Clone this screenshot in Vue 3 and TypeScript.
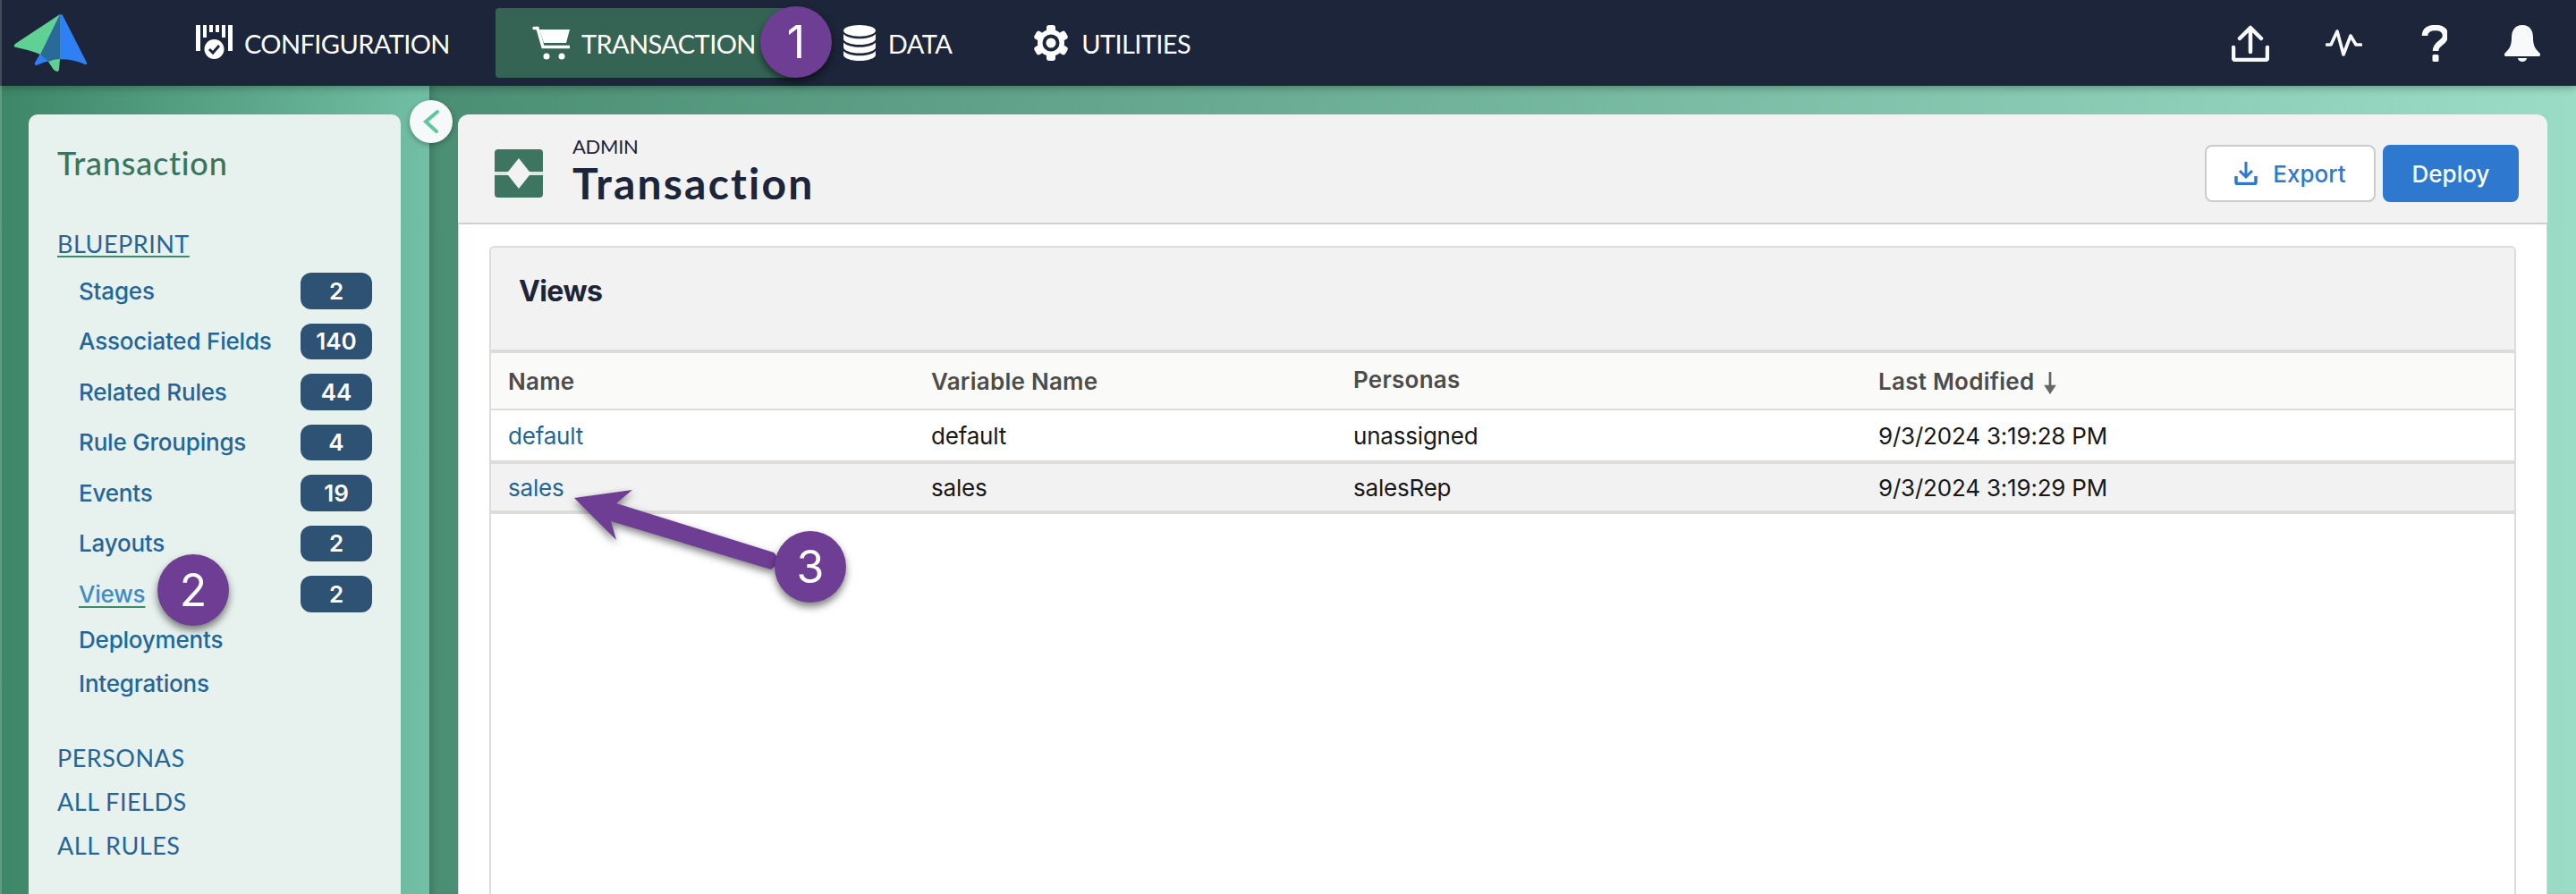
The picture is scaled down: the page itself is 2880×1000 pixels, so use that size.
<script setup lang="ts">
interface NavItem {
  label: string
  icon: string
  active?: boolean
}
interface SideItem {
  label: string
  count?: number
  current?: boolean
}
interface ViewRow {
  name: string
  variable: string
  persona: string
  modified: string
}

const navItems: NavItem[] = [
  { label: 'CONFIGURATION', icon: 'config' },
  { label: 'TRANSACTION', icon: 'cart', active: true },
  { label: 'DATA', icon: 'data' },
  { label: 'UTILITIES', icon: 'gear' }
]

const blueprintItems: SideItem[] = [
  { label: 'Stages', count: 2 },
  { label: 'Associated Fields', count: 140 },
  { label: 'Related Rules', count: 44 },
  { label: 'Rule Groupings', count: 4 },
  { label: 'Events', count: 19 },
  { label: 'Layouts', count: 2 },
  { label: 'Views', count: 2, current: true }
]

const plainItems = ['Deployments', 'Integrations']
const sections = ['PERSONAS', 'ALL FIELDS', 'ALL RULES']

const rows: ViewRow[] = [
  { name: 'default', variable: 'default', persona: 'unassigned', modified: '9/3/2024 3:19:28 PM' },
  { name: 'sales', variable: 'sales', persona: 'salesRep', modified: '9/3/2024 3:19:29 PM' }
]
</script>

<template>
  <div class="app">
    <header class="topbar">
      <svg class="logo" viewBox="0 0 120 96" width="120" height="96">
        <path fill="#2f80f5" d="M67 17Q69 15 70 17L97 70Q98 73 95 72Q68 60 41 73Q38 73 39 70L45 60Z" />
        <path fill="#5fd192" d="M67 16 17 49Q14 52 18 53Q34 56 45 61L54 69L60 78Q65 82 66 78L67 66Z" />
        <path fill="#2a6a98" d="M67 16 45 61 54 69Q60 66 67 66Z" />
      </svg>
      <nav class="nav">
        <a v-for="item in navItems" :key="item.label" class="nav-item" :class="{ active: item.active }">
          <svg v-if="item.icon === 'config'" viewBox="0 0 41 40" width="41" height="40" fill="#fff">
            <path d="M0 0h5v29H0zM8 0h4v14H8zM15 0h4v8h-4zM22 0h4v8h-4zM29 0h4v14h-4zM36 0h5v29h-5z" />
            <circle cx="20.5" cy="26" r="12.5" fill="#1c2539" />
            <circle cx="20.5" cy="27" r="11" />
            <path d="M15 27l4 4 7-8" fill="none" stroke="#1c2539" stroke-width="3" />
          </svg>
          <svg v-else-if="item.icon === 'cart'" viewBox="0 0 42 38" width="42" height="38" fill="#fff">
            <path d="M2 2.500h4l6 21h29" fill="none" stroke="#fff" stroke-width="3.500" stroke-linecap="round" />
            <path d="M8 4h34l-4 15H13z" />
            <circle cx="16" cy="34" r="3.500" />
            <circle cx="33" cy="34" r="3.500" />
          </svg>
          <svg v-else-if="item.icon === 'data'" viewBox="0 0 36 38" width="38" height="40" fill="#fff">
            <ellipse cx="18" cy="6" rx="17" ry="6" />
            <path d="M1 9.500C4 13 11 14.500 18 14.500S32 13 35 9.500V15c0 3-8 6-17 6S1 18 1 15z" />
            <path d="M1 18.500C4 22 11 23.500 18 23.500S32 22 35 18.500V24c0 3-8 6-17 6S1 27 1 24z" />
            <path d="M1 27.500C4 31 11 32.500 18 32.500S32 31 35 27.500V32c0 3-8 6-17 6S1 35 1 32z" />
          </svg>
          <svg v-else viewBox="0 0 38 40" width="38" height="40" fill="#fff">
            <rect x="14" y="0" width="10" height="40" rx="3" />
            <rect x="14" y="0" width="10" height="40" rx="3" transform="rotate(60 19 20)" />
            <rect x="14" y="0" width="10" height="40" rx="3" transform="rotate(120 19 20)" />
            <circle cx="19" cy="20" r="15" />
            <circle cx="19" cy="20" r="9.500" fill="#1c2539" />
            <circle cx="19" cy="20" r="5.500" />
          </svg>
          <span>{{ item.label }}</span>
        </a>
      </nav>
      <div class="tools">
        <svg viewBox="0 0 42 41" width="42" height="41" fill="none" stroke="#f8f9fb" stroke-width="4.500" stroke-linecap="round" stroke-linejoin="round">
          <path d="M2 25v12a2 2 0 0 0 2 2h34a2 2 0 0 0 2-2V25" />
          <path d="M21 30V3M9 15 21 3l12 12" />
        </svg>
        <svg viewBox="0 0 41 30" width="41" height="30" fill="none" stroke="#f8f9fb" stroke-width="3.600" stroke-linecap="round" stroke-linejoin="round">
          <path d="M1.500 17H6L13 2l7 26 8-21 6 10h5.500" />
        </svg>
        <svg viewBox="-4 0 32 41" width="32" height="41" fill="#f8f9fb">
          <path d="M3 12C3 5 9 3 15 3c7 0 11 3 11 9 0 8-11 8-11 17" fill="none" stroke="#f8f9fb" stroke-width="6.500" />
          <rect x="11.500" y="33" width="7" height="8" rx="1.500" />
        </svg>
        <svg viewBox="0 0 42 41" width="42" height="41" fill="#f8f9fb">
          <path d="M21 0C12 0 9 7 9 14 9 24 6 27 2 31c-2 2-1 4 1 4h36c2 0 3-2 1-4-4-4-7-7-7-17 0-7-3-14-12-14Z" />
          <path d="M16 37h10a5 4 0 0 1-10 0Z" />
        </svg>
      </div>
    </header>

    <div class="body">
      <aside class="side-col">
        <div class="side-panel">
          <h2 class="side-title">Transaction</h2>
          <a class="section-link underlined">BLUEPRINT</a>
          <ul class="counted">
            <li v-for="item in blueprintItems" :key="item.label">
              <a class="side-link" :class="{ current: item.current }">{{ item.label }}</a>
              <span class="badge">{{ item.count }}</span>
            </li>
          </ul>
          <a v-for="label in plainItems" :key="label" class="side-link plain">{{ label }}</a>
          <div class="sections">
            <a v-for="label in sections" :key="label" class="section-link">{{ label }}</a>
          </div>
        </div>
      </aside>

      <main class="main-col">
        <section class="panel">
          <div class="panel-head">
            <svg class="object-icon" viewBox="0 0 54 54" width="54" height="54">
              <rect width="54" height="54" rx="4" fill="#3d7560" />
              <rect y="25" width="54" height="4" fill="#dbe7e2" />
              <path d="M27 10 40.500 27 27 44 13.500 27Z" fill="#f2f2f2" />
            </svg>
            <div class="head-text">
              <div class="eyebrow">ADMIN</div>
              <h1>Transaction</h1>
            </div>
            <div class="actions">
              <button class="btn">
                <svg viewBox="0 0 26 26" width="26" height="26" fill="none" stroke="#2f78cf" stroke-width="3">
                  <path d="M13 0v16M6 10l7 7 7-7" />
                  <path d="M2 16v7a1.500 1.500 0 0 0 1.500 1.500h19A1.500 1.500 0 0 0 24 23v-7" stroke-width="3.500" />
                </svg>
                Export
              </button>
              <button class="btn primary">Deploy</button>
            </div>
          </div>

          <div class="panel-body">
            <div class="card">
              <div class="card-head">Views</div>
              <div class="grid-row head-row">
                <div>Name</div>
                <div>Variable Name</div>
                <div class="raised">Personas</div>
                <div class="sortable">
                  Last Modified
                  <svg viewBox="0 0 14 22" width="16" height="25" fill="#666">
                    <path d="M5.800 0h2.400v15H5.800z" />
                    <path d="M1 13h12l-6 9z" />
                  </svg>
                </div>
              </div>
              <div v-for="row in rows" :key="row.name" class="grid-row data-row">
                <div><a class="row-link">{{ row.name }}</a></div>
                <div>{{ row.variable }}</div>
                <div>{{ row.persona }}</div>
                <div>{{ row.modified }}</div>
              </div>
            </div>
          </div>
        </section>
      </main>
    </div>

    <button class="collapse">
      <svg viewBox="0 0 48 48" width="48" height="48" fill="none" stroke="#5fc79a" stroke-width="4" stroke-linecap="round">
        <path d="M31 13 18 24l12 11" />
      </svg>
    </button>

    <span class="marker marker-1">1</span>
    <span class="marker marker-2">2</span>
    <svg class="arrow" viewBox="0 0 260 110" width="260" height="110">
      <path fill="#6e3d94" d="M12 17 77 8 59 23 235 78Q245 88 232 97L53 43 59 64Z" />
    </svg>
    <span class="marker marker-3">3</span>
    <i class="edge" />
  </div>
</template>

<style scoped>
.app {
  position: relative;
  width: 2880px;
  height: 1000px;
  overflow: hidden;
  display: flex;
  flex-direction: column;
  font-family: Inter, "Liberation Sans", sans-serif;
  font-size: 26px;
}
.topbar {
  position: relative;
  z-index: 2;
  flex: 0 0 96px;
  display: flex;
  align-items: center;
  background: #1c2539;
  box-shadow: 0 3px 8px rgba(0, 0, 0, 0.25);
}
.logo {
  flex: none;
  margin-right: 58px;
}
.nav {
  display: flex;
  gap: 10px;
}
.nav-item {
  display: flex;
  align-items: center;
  gap: 13px;
  height: 78px;
  padding: 0 41px;
  border-radius: 4px;
  color: #fff;
  font-family: Lato, sans-serif;
  font-size: 29px;
  letter-spacing: -0.6px;
}
.nav-item.active {
  padding-right: 46px;
  background: #356454;
}
.nav-item:last-child {
  gap: 15px;
}
.tools {
  margin-left: auto;
  padding-right: 39px;
  display: flex;
  align-items: center;
  gap: 63px;
}
.body {
  flex: 1;
  display: flex;
  min-height: 0;
}
.side-col {
  flex: 0 0 480px;
  padding: 32px 32px 0;
  box-sizing: border-box;
  background: linear-gradient(90deg, #3e8668, #72bfa5);
}
.side-panel {
  height: 100%;
  box-sizing: border-box;
  padding: 32px 32px 0;
  background: #e7f1ed;
  border-radius: 10px 10px 0 0;
  display: flex;
  flex-direction: column;
  align-items: stretch;
}
.side-title {
  margin: 0 0 44px;
  font-family: Lato, sans-serif;
  font-size: 36px;
  line-height: 44px;
  font-weight: 500;
  letter-spacing: 0.8px;
  color: #387660;
}
.section-link {
  display: block;
  font-family: Lato, sans-serif;
  font-size: 27px;
  line-height: 49px;
  letter-spacing: 0.5px;
  color: #24669a;
}
.underlined {
  align-self: flex-start;
  line-height: 33px;
  padding-top: 8px;
  margin-bottom: 16px;
  text-decoration: underline;
  text-decoration-color: #3b8a6a;
  text-underline-offset: 3px;
}
.counted {
  list-style: none;
  margin: 0;
  padding: 0;
  display: flex;
  flex-direction: column;
  gap: 16px;
}
.counted li {
  display: flex;
  align-items: center;
  justify-content: space-between;
  height: 40.5px;
}
.side-link {
  padding-left: 24px;
  color: #24669a;
  font-weight: 500;
  font-size: 26px;
  letter-spacing: -0.2px;
}
.side-link.current {
  color: #3f8dc4;
  text-decoration: underline;
  text-decoration-color: #3b8a6a;
  text-underline-offset: 4px;
}
.side-link.plain {
  line-height: 49px;
}
.counted + .side-link {
  margin-top: 6px;
}
.badge {
  width: 80px;
  height: 100%;
  border-radius: 12px;
  background: #2e5274;
  color: #fff;
  font-weight: 600;
  font-size: 26px;
  display: flex;
  align-items: center;
  justify-content: center;
}
.sections {
  margin-top: 34px;
}
.main-col {
  flex: 1;
  min-width: 0;
  padding: 32px 32px 0;
  display: flex;
  background: linear-gradient(90deg, #4a8e74, #9bdcc6);
  box-shadow: inset 8px 0 10px -6px rgba(0, 0, 0, 0.2);
}
.panel {
  flex: 1;
  min-width: 0;
  display: flex;
  flex-direction: column;
  border-radius: 12px 12px 0 0;
  background: #f2f2f2;
}
.panel-head {
  display: flex;
  align-items: flex-start;
  height: 87px;
  padding: 34px 32px 0 41px;
  border-bottom: 2px solid #cfcfcf;
}
.object-icon {
  flex: none;
  margin-top: 5px;
}
.head-text {
  margin-left: 33px;
  margin-top: -11px;
}
.eyebrow {
  font-family: Lato, sans-serif;
  font-size: 22px;
  line-height: 26px;
  letter-spacing: -0.3px;
  color: #1c2539;
}
h1 {
  margin: 0;
  font-family: Lato, sans-serif;
  font-size: 48px;
  line-height: 56px;
  font-weight: 700;
  letter-spacing: 2.2px;
  color: #1c2539;
}
.actions {
  margin-left: auto;
  display: flex;
  gap: 8px;
}
.btn {
  height: 64px;
  width: 191px;
  box-sizing: border-box;
  border: 2px solid #cbcbcb;
  border-radius: 8px;
  background: #fff;
  color: #2f78cf;
  font: 500 26px Inter, sans-serif;
  display: flex;
  align-items: center;
  justify-content: center;
  gap: 17px;
  padding: 0;
}
.btn.primary {
  width: 152px;
  border-color: #2f78cf;
  background: #2f78cf;
  color: #fff;
}
.panel-body {
  flex: 1;
  min-height: 0;
  display: flex;
  background: #fff;
  padding: 24px 34px 0;
  border: solid #d6d6d6;
  border-width: 0 1px;
}
.card {
  flex: 1;
  min-width: 0;
  border: 2px solid #dedbdb;
  border-bottom: 0;
  border-radius: 6px 6px 0 0;
}
.card-head {
  height: 114px;
  padding: 0 31px;
  background: #f2f2f2;
  border-bottom: 4px solid #dedbdb;
  border-radius: 4px 4px 0 0;
  font-size: 32px;
  font-weight: 700;
  line-height: 98px;
  letter-spacing: -0.6px;
  color: #1c2539;
}
.grid-row {
  display: grid;
  grid-template-columns: 473px 472px 587px 1fr;
  padding-left: 19px;
  align-items: center;
}
.head-row {
  height: 62px;
  background: #fafaf8;
  border-bottom: 2px solid #dedbdb;
  font-weight: 600;
  letter-spacing: 0.25px;
  color: #4d4c49;
}
.raised {
  padding-bottom: 4px;
}
.sortable {
  display: flex;
  align-items: center;
  gap: 10px;
}
.sortable svg {
  margin-top: 5px;
}
.data-row {
  color: #181818;
  letter-spacing: -0.2px;
  border-bottom: 4px solid #dedbdb;
  height: 52px;
}
.data-row:nth-of-type(3) {
  height: 56px;
}
.data-row:nth-of-type(4) {
  background: #f2f2f2;
}
.row-link {
  color: #236596;
}
.collapse {
  position: absolute;
  left: 458px;
  top: 112px;
  z-index: 3;
  width: 48px;
  height: 48px;
  padding: 0;
  border: 0;
  border-radius: 50%;
  background: #f6f9fa;
  box-shadow: 0 2px 6px rgba(0, 0, 0, 0.3);
}
.marker {
  position: absolute;
  z-index: 4;
  width: 80px;
  height: 80px;
  border-radius: 50%;
  background: #6e3d94;
  color: #fff;
  font-size: 50px;
  line-height: 80px;
  text-align: center;
  box-shadow: 0 5px 8px rgba(0, 0, 0, 0.5);
}
.marker-1 {
  left: 850px;
  top: 7px;
}
.marker-2 {
  left: 176px;
  top: 620px;
}
.marker-3 {
  left: 866px;
  top: 594px;
}
.arrow {
  position: absolute;
  z-index: 3;
  left: 630px;
  top: 540px;
  filter: drop-shadow(0 4px 4px rgba(0, 0, 0, 0.5));
}
.edge {
  position: absolute;
  z-index: 5;
  left: 0;
  top: 0;
  bottom: 0;
  width: 2px;
  background: rgba(255, 255, 255, 0.18);
}
</style>
